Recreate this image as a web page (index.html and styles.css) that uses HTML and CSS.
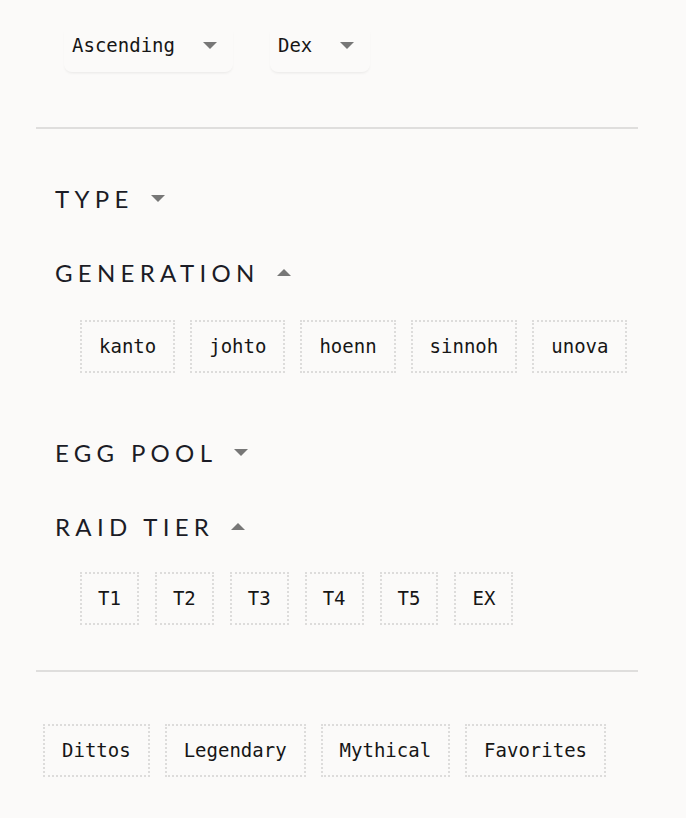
FILE: index.html
```html
<!DOCTYPE html>
<html>
<head>
<meta charset="utf-8">
<link rel="stylesheet" href="styles.css">
</head>
<body>
<div class="panel">
  <div class="sort-row">
    <div class="select"><span>Ascending</span><span class="caret down"></span></div>
    <div class="select"><span>Dex</span><span class="caret down"></span></div>
  </div>
  <hr class="rule top">
  <div class="filters">
    <div class="group">
      <div class="heading">TYPE<span class="caret down"></span></div>
    </div>
    <div class="group">
      <div class="heading">GENERATION<span class="caret up"></span></div>
      <div class="chips">
        <div class="chip">kanto</div>
        <div class="chip">johto</div>
        <div class="chip">hoenn</div>
        <div class="chip">sinnoh</div>
        <div class="chip">unova</div>
      </div>
    </div>
    <div class="group">
      <div class="heading">EGG POOL<span class="caret down"></span></div>
    </div>
    <div class="group last">
      <div class="heading">RAID TIER<span class="caret up"></span></div>
      <div class="chips tiers">
        <div class="chip">T1</div>
        <div class="chip">T2</div>
        <div class="chip">T3</div>
        <div class="chip">T4</div>
        <div class="chip">T5</div>
        <div class="chip">EX</div>
      </div>
    </div>
  </div>
  <hr class="rule">
  <div class="toggles">
    <div class="chip">Dittos</div>
    <div class="chip">Legendary</div>
    <div class="chip">Mythical</div>
    <div class="chip">Favorites</div>
  </div>
</div>
</body>
</html>
```

FILE: styles.css
```css
html, body {
  margin: 0;
  padding: 0;
  background: #fbfaf9;
}
body {
  font-family: "DejaVu Sans Mono", "Liberation Mono", monospace;
  color: #161616;
}
.panel {
  padding: 26px 48px 0 36px;
}
.sort-row {
  display: flex;
  gap: 37px;
  margin-left: 28px;
}
.select {
  display: flex;
  align-items: center;
  height: 46px;
  padding: 0 16px 8px 8px;
  border-radius: 8px;
  box-shadow: 0 2px 3px -1px rgba(0, 0, 0, 0.08);
  font-size: 19px;
  gap: 28px;
  box-sizing: border-box;
}
.caret {
  display: inline-block;
  width: 0;
  height: 0;
  border-left: 7px solid transparent;
  border-right: 7px solid transparent;
}
.caret.down {
  border-top: 7px solid #777;
}
.caret.up {
  border-bottom: 7px solid #777;
}
.rule {
  border: 0;
  border-top: 2px solid #dfdedd;
  margin: 0;
}
.rule.top {
  margin-top: 55px;
}
.filters {
  display: flex;
  flex-direction: column;
  gap: 44px;
  padding: 55px 0 45px 19px;
}
.group {
  display: flex;
  flex-direction: column;
}
.heading {
  display: flex;
  align-items: center;
  font-family: Lato, "Open Sans", sans-serif;
  font-size: 24px;
  line-height: 30px;
  height: 30px;
  letter-spacing: 5.3px;
  color: #1b1c26;
}
.heading .caret {
  margin-left: 17px;
  margin-top: -2px;
}
.chips {
  display: flex;
  gap: 15px;
  margin: 32px 0 21px 25px;
}
.group.last .chips {
  margin: 30px 0 0 25px;
}
.chips.tiers {
  gap: 16px;
}
.chips.tiers .chip {
  padding: 15px 16px;
}
.chip {
  border: 2px dotted #dddcdb;
  padding: 15px 17px;
  font-size: 19px;
  line-height: 19px;
  color: #161616;
}
.toggles {
  display: flex;
  gap: 15px;
  margin: 52px 0 0 7px;
}
```
